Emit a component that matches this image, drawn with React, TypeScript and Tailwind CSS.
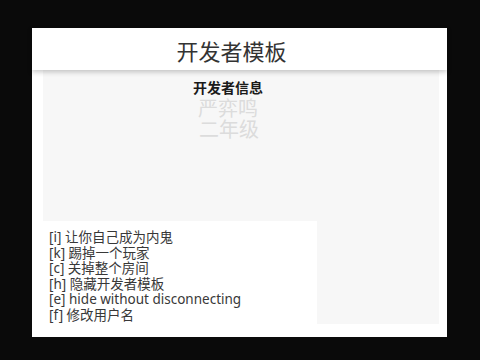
export default function App() {
  const items = [
    "[i] 让你自己成为内鬼",
    "[k] 踢掉一个玩家",
    "[c] 关掉整个房间",
    "[h] 隐藏开发者模板",
    "[e] hide without disconnecting",
    "[f] 修改用户名",
  ];
  return (
    <div className="w-[480px] h-[360px] bg-[#0a0a0a] pt-[28px] pl-[32px]" style={{ fontFamily: '"Noto Sans", "Noto Sans CJK SC", sans-serif' }}>
      <div className="w-[415px] h-[309px] bg-white flex flex-col">
        <div className="relative z-10 h-[42px] flex items-center justify-center pr-[16px] pt-[4px] bg-white shadow-[0_2px_5px_rgba(0,0,0,0.22)]">
          <span className="text-[22px] text-[#333] leading-none">开发者模板</span>
        </div>
        <div className="ml-[11px] mr-[8px] h-[254px] bg-[#f7f7f7] flex flex-col">
          <div className="flex flex-col items-center pr-[26px] pt-[9px]">
            <div className="text-[14px] font-bold text-[#1a1a1a] leading-[18px]">开发者信息</div>
            <div className="text-[20px] text-[#dcdcdc] leading-[20.5px] mt-[2px]">严弈鸣</div>
            <div className="text-[20px] text-[#dcdcdc] leading-[20.5px] pl-[2px]">二年级</div>
          </div>
          <div className="flex-1" />
          <div className="w-[274px] h-[103px] bg-white pt-[9px] pl-[6px]">
            {items.map((t) => (
              <div key={t} className="text-[13.5px] leading-[15.6px] text-[#383838] whitespace-nowrap">{t}</div>
            ))}
          </div>
        </div>
      </div>
    </div>
  );
}
